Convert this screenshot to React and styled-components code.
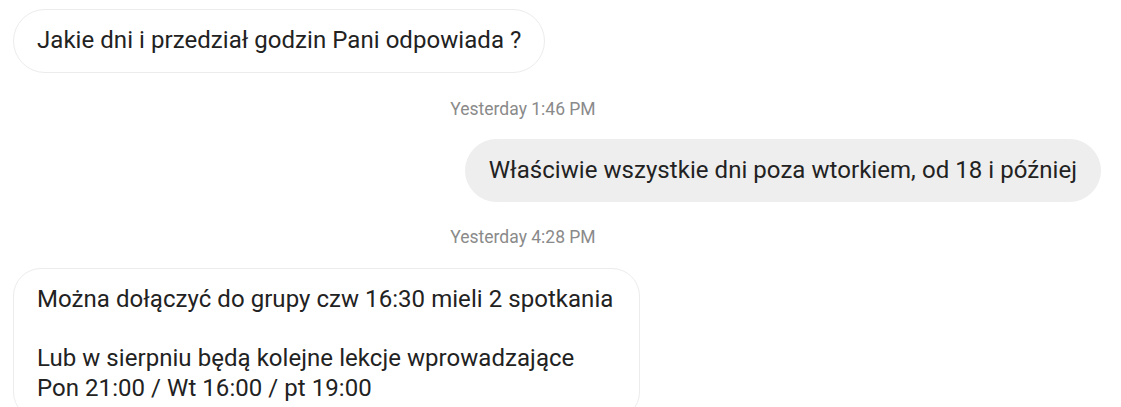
import React from 'react';
import styled, { createGlobalStyle } from 'styled-components';

const GlobalStyle = createGlobalStyle`
  html, body {
    margin: 0;
    padding: 0;
    background: #ffffff;
  }
  body {
    font-family: Roboto, "Noto Sans", sans-serif;
    color: #222222;
  }
`;

const Thread = styled.div`
  display: flex;
  flex-direction: column;
  padding: 9px 20px 0 13px;
  width: 1121px;
  box-sizing: border-box;
`;

const Row = styled.div`
  display: flex;
  justify-content: ${(p) => (p.$out ? 'flex-end' : 'flex-start')};
  margin-top: ${(p) => p.$gap || 0}px;
`;

const Bubble = styled.div`
  box-sizing: border-box;
  padding: ${(p) => (p.$multi ? '16px 26px 16px 23px' : '16px 23px')};
  font-size: 24px;
  line-height: 29.5px;
  letter-spacing: 0.05px;
  color: #222222;
  white-space: pre-line;
  border-radius: ${(p) => (p.$multi ? '28px' : '32px')};
  background: ${(p) => (p.$out ? '#eeeeee' : '#ffffff')};
  border: 1px solid ${(p) => (p.$out ? '#eeeeee' : '#ececec')};
`;

const Stamp = styled.div`
  text-align: center;
  font-size: 17.5px;
  line-height: 20px;
  color: #8a8a8a;
  margin-top: ${(p) => p.$gap}px;
  padding-right: 68px;
`;

export default function App() {
  return (
    <>
      <GlobalStyle />
      <Thread>
        <Row>
          <Bubble>Jakie dni i przedział godzin Pani odpowiada ?</Bubble>
        </Row>
        <Stamp $gap={26}>Yesterday 1:46 PM</Stamp>
        <Row $out $gap={20}>
          <Bubble $out>Właściwie wszystkie dni poza wtorkiem, od 18 i później</Bubble>
        </Row>
        <Stamp $gap={25}>Yesterday 4:28 PM</Stamp>
        <Row $gap={21}>
          <Bubble $multi>
            {'Można dołączyć do grupy czw 16:30 mieli 2 spotkania\n\nLub w sierpniu będą kolejne lekcje wprowadzające\nPon 21:00 / Wt 16:00 / pt 19:00'}
          </Bubble>
        </Row>
      </Thread>
    </>
  );
}
